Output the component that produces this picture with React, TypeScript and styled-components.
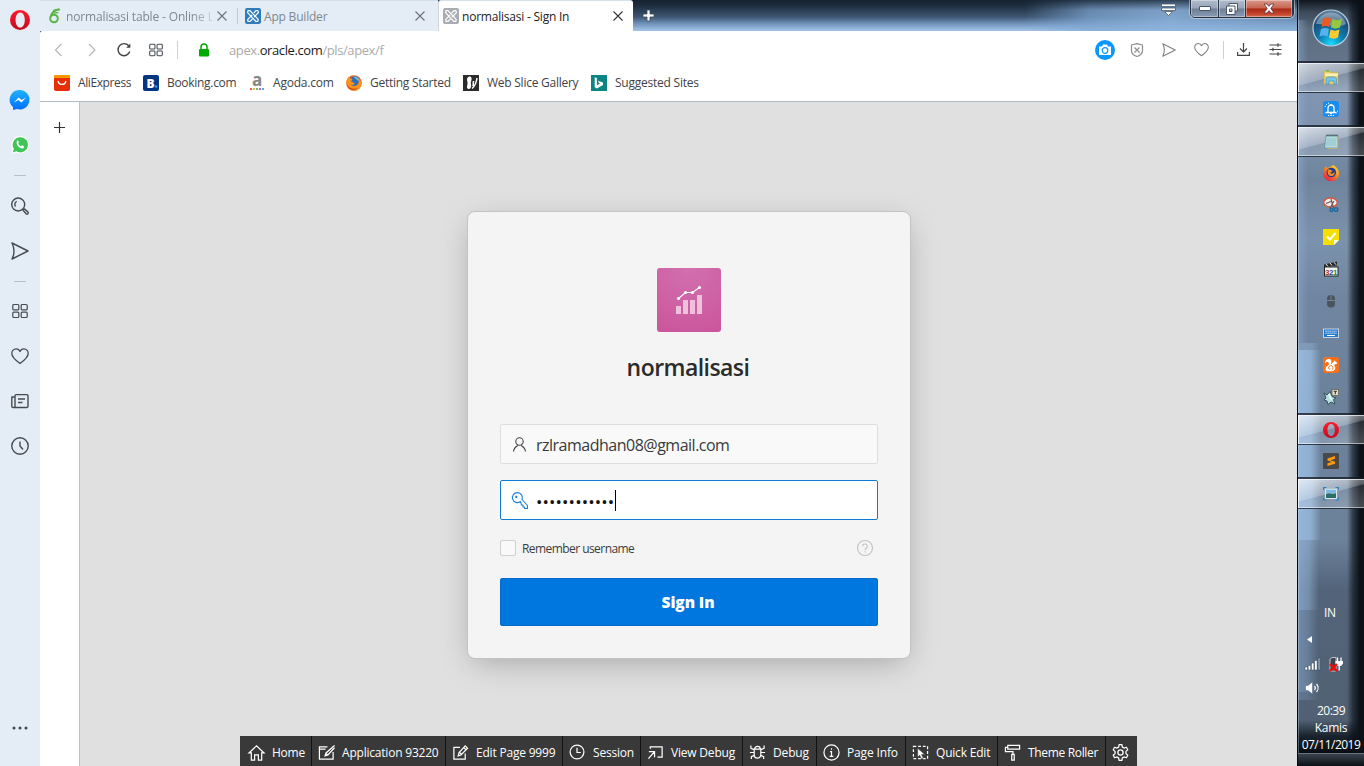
import React from "react";
import styled, { createGlobalStyle, css } from "styled-components";

const Global = createGlobalStyle`
  * { box-sizing: border-box; }
  body { margin: 0; overflow: hidden; font-family: "Open Sans", "Noto Sans", sans-serif; font-size: 12px; color: #3c3c3c; }
  svg { display: block; flex: none; overflow: visible; }
`;

const Desktop = styled.div`
  display: flex;
  width: 1364px;
  height: 766px;
  overflow: hidden;
  background: #101820;
`;

const Browser = styled.div`
  display: flex;
  width: 1297px;
  flex: none;
`;

const Label = styled.span<{ $ls?: number }>`
  white-space: nowrap;
  letter-spacing: ${(p) => p.$ls ?? 0}px;
`;

/* ---------- sidebar ---------- */

const Sidebar = styled.aside`
  width: 40px;
  flex: none;
  display: flex;
  flex-direction: column;
  align-items: center;
  background: #e4edf5;
`;

const SideItem = styled.div<{ $h: number }>`
  height: ${(p) => p.$h}px;
  width: 40px;
  flex: none;
  display: flex;
  align-items: center;
  justify-content: center;
`;

const SideRule = styled.div`
  width: 12px;
  height: 1px;
  background: #b4c2ce;
`;

const Spacer = styled.div<{ $h?: number; $w?: number }>`
  ${(p) =>
    p.$h !== undefined
      ? css`height: ${p.$h}px; flex: none;`
      : p.$w !== undefined
        ? css`width: ${p.$w}px; flex: none;`
        : css`flex: 1;`}
`;

/* ---------- window chrome ---------- */

const Main = styled.div`
  flex: 1;
  min-width: 0;
  display: flex;
  flex-direction: column;
`;

const TitleBar = styled.div`
  height: 31px;
  flex: none;
  display: flex;
  background:
    linear-gradient(180deg, rgba(20, 32, 46, 0.75) 0, rgba(20, 32, 46, 0) 10px),
    linear-gradient(90deg, rgba(128, 168, 212, 0) 0, rgba(128, 168, 212, 0) 985px, rgba(128, 168, 212, 0.7) 1050px, rgba(140, 178, 220, 0.85) 1130px, rgba(130, 168, 208, 0.6) 1257px),
    linear-gradient(180deg, #1b2a3a 0, #2a3d52 10px, #3e5673 17px, #6c8db3 23px, #95b8df 29px, #a3c4e8 31px);
`;

const Tab = styled.div<{ $w: number; $active?: boolean }>`
  width: ${(p) => p.$w}px;
  height: 31px;
  flex: none;
  display: flex;
  align-items: center;
  border-top: 1px solid #d3dfea;
  background: ${(p) => (p.$active ? "#fff" : "#e4edf5")};
  color: ${(p) => (p.$active ? "#222" : "#7d8790")};
  ${(p) => p.$active && css`border-radius: 3px 3px 0 0; border-left: 1px solid #cfd6de; padding-left: 4px;`}
`;

const TabText = styled.div<{ $w: number; $fade?: boolean }>`
  width: ${(p) => p.$w}px;
  margin-left: 3px;
  white-space: nowrap;
  ${(p) => p.$fade && css`mask-image: linear-gradient(90deg, #000 125px, rgba(0, 0, 0, 0.25) 146px);`}
`;

const TabSeparator = styled.div`
  width: 1px;
  height: 16px;
  margin: 0 6px 0 10px;
  background: #c3c8cd;
`;

const NewTab = styled.div`
  width: 31px;
  display: flex;
  align-items: center;
  justify-content: center;
`;

const WindowControls = styled.div`
  display: flex;
  height: 19px;
  width: 104px;
  margin: -1px 3px 0 14px;
  border: 1px solid #26303e;
  border-radius: 0 0 5px 5px;
  overflow: hidden;
  box-shadow: 0 0 0 1px rgba(255, 255, 255, 0.4);
`;

const WindowButton = styled.div<{ $w: number; $danger?: boolean }>`
  width: ${(p) => p.$w}px;
  display: flex;
  align-items: center;
  justify-content: center;
  border-right: 1px solid #2b3646;
  box-shadow: inset 0 0 0 1px rgba(255, 255, 255, 0.35);
  background: ${(p) =>
    p.$danger
      ? "linear-gradient(180deg,#d99a8c 0,#c76451 8px,#a82a15 9px,#c5452c 14px,#e08b66 19px)"
      : "linear-gradient(180deg,#b0bccb 0,#98a6b9 8px,#6f7f95 9px,#8fa2ba 19px)"};
`;

const AddressBar = styled.div`
  height: 37px;
  flex: none;
  display: flex;
  align-items: center;
  background: #fff;
  border-radius: 2px 0 0 0;
`;

const Slot = styled.div<{ $w: number }>`
  width: ${(p) => p.$w}px;
  flex: none;
  display: flex;
  align-items: center;
  justify-content: center;
`;

const BarRule = styled.div`
  width: 1px;
  height: 18px;
  background: #cfcfcf;
`;

const Url = styled.div`
  flex: 1;
  margin-left: 9px;
  font-size: 13px;
  color: #ababab;
  letter-spacing: -0.4px;
  b { font-weight: 400; color: #1b1b1b; }
`;

const BookmarkBar = styled.div`
  height: 34px;
  flex: none;
  display: flex;
  align-items: center;
  padding: 0 0 4px 14px;
  background: #fff;
  border-bottom: 1px solid #b0bac4;
`;

const Bookmark = styled.div<{ $w: number }>`
  width: ${(p) => p.$w}px;
  flex: none;
  display: flex;
  align-items: center;
  gap: 8px;
  color: #3f4347;
`;

/* ---------- page ---------- */

const Content = styled.div`
  flex: 1;
  display: flex;
  min-height: 0;
`;

const SidePanel = styled.div`
  width: 40px;
  flex: none;
  background: #fff;
  border-right: 1px solid #bfc3c6;
  display: flex;
  justify-content: center;
  padding-top: 20px;
`;

const Page = styled.main`
  flex: 1;
  background: #e0e0e0;
  display: flex;
  flex-direction: column;
  align-items: center;
  padding: 109px 0 0 1px;
`;

const Card = styled.section`
  width: 444px;
  height: 448px;
  flex: none;
  display: flex;
  flex-direction: column;
  align-items: center;
  padding: 56px 32px 0;
  background: #f4f4f4;
  border: 1px solid #c3c3c3;
  border-radius: 8px;
  box-shadow: 0 8px 32px -6px rgba(0, 0, 0, 0.28);
`;

const AppLogo = styled.div`
  width: 64px;
  height: 64px;
  border-radius: 3px;
  background: radial-gradient(circle at 50% 0, #d270ae 0, #ca559b 100%);
`;

const Title = styled.h1`
  margin: 17px 2px 0 0;
  height: 36px;
  line-height: 36px;
  font-size: 23px;
  font-weight: 600;
  color: #2b2b2b;
  letter-spacing: -0.55px;
`;

const Field = styled.div<{ $focus?: boolean }>`
  width: 378px;
  height: 40px;
  margin-top: ${(p) => (p.$focus ? 16 : 39)}px;
  flex: none;
  display: flex;
  align-items: center;
  padding-left: 10px;
  border: 1px solid ${(p) => (p.$focus ? "#0f7bd8" : "#dedede")};
  border-radius: 2px;
  background: ${(p) => (p.$focus ? "#fff" : "#f9f9f9")};
  font-size: 16px;
  color: #393939;
`;

const FieldText = styled.div`
  margin-left: 8px;
  padding-top: 2px;
  letter-spacing: -0.5px;
`;

const Bullets = styled.div`
  margin-left: 8px;
  padding-top: 3px;
  width: 79px;
  height: 24px;
  line-height: 22px;
  white-space: nowrap;
  font-size: 17px;
  letter-spacing: 0.13px;
  color: #111;
`;

const Caret = styled.div`
  width: 1px;
  height: 21px;
  background: #000;
`;

const OptionRow = styled.div`
  width: 378px;
  height: 16px;
  margin-top: 20px;
  display: flex;
  align-items: center;
`;

const Checkbox = styled.div`
  width: 16px;
  height: 16px;
  margin-right: 6px;
  border: 1px solid #d0d0d0;
  border-radius: 2px;
  background: #f9f9f9;
`;

const SignIn = styled.button`
  width: 378px;
  height: 48px;
  margin-top: 22px;
  border: 1px solid #026bc9;
  border-radius: 2px;
  background: #0076df;
  color: #fff;
  font: 800 15.5px "Open Sans", sans-serif;
  letter-spacing: -0.1px;
  padding: 0 2px 0 0;
`;

const DevBar = styled.nav`
  height: 30px;
  margin: auto 1px 0 0;
  flex: none;
  display: flex;
  background: #393939;
  color: #fff;
`;

const DevItem = styled.div<{ $w: number }>`
  width: ${(p) => p.$w}px;
  display: flex;
  align-items: center;
  gap: 7px;
  padding: 2px 0 0 6px;
  &:first-child { padding-left: 8px; }
  & + & { box-shadow: -1px 0 0 #121212; }
`;

/* ---------- desktop taskbar ---------- */

const Taskbar = styled.div`
  width: 67px;
  flex: none;
  display: flex;
  flex-direction: column;
  align-items: center;
  border-left: 1px solid #05080c;
  box-shadow: inset 1px 0 0 rgba(200, 220, 240, 0.35);
  background:
    linear-gradient(90deg, transparent 49px, rgba(8, 14, 22, 0.6) 55px, #0b1117 62px),
    radial-gradient(ellipse 24px 8px at 0 346px, transparent 50%, transparent),
    linear-gradient(90deg, rgba(165, 205, 245, 0.7) 0, rgba(165, 205, 245, 0.6) 13px, transparent 23px) 0 350px / 30px 190px no-repeat,
    linear-gradient(90deg, rgba(165, 205, 245, 0.35) 0, rgba(165, 205, 245, 0.3) 13px, transparent 21px) 0 343px / 30px 7px no-repeat,
    linear-gradient(90deg, rgba(155, 192, 232, 0.62) 0, rgba(155, 192, 232, 0.45) 11px, transparent 21px) 0 540px / 30px 70px no-repeat,
    linear-gradient(90deg, rgba(140, 175, 215, 0.52) 0, rgba(140, 175, 215, 0.35) 10px, transparent 20px) 0 610px / 30px 82px no-repeat,
    linear-gradient(90deg, rgba(140, 175, 215, 0.28) 0, rgba(140, 175, 215, 0.2) 10px, transparent 20px) 0 692px / 30px 8px no-repeat,
    linear-gradient(90deg, rgba(150, 185, 220, 0.4), transparent 10px) 0 20px / 30px 323px no-repeat,
    linear-gradient(180deg, #10161e 0, #3c4a5a 12px, #5d6d81 30px, #63748a 60px, #7f95b1 95px, #7c91ac 130px, #6f849c 180px, #7b92ad 240px, #70859f 300px, #6c819a 400px, #6c819a 540px, #53647a 590px, #516173 720px, #1a232d 736px, #080c11 754px);
`;

const StartOrb = styled.div`
  height: 61px;
  padding-top: 9px;
`;

const Task = styled.div<{ $open?: boolean }>`
  width: 66px;
  height: 32px;
  flex: none;
  display: flex;
  align-items: center;
  justify-content: center;
  ${(p) =>
    p.$open &&
    css`
      border-top: 2px solid rgba(16, 26, 36, 0.75);
      border-bottom: 1px solid rgba(16, 26, 36, 0.75);
      background:
        linear-gradient(165deg, rgba(255, 255, 255, 0.7) 0, rgba(255, 255, 255, 0.32) 48%, rgba(255, 255, 255, 0.12) 50%, rgba(255, 255, 255, 0.25) 100%) padding-box;
      box-shadow: inset 1px 1px 0 rgba(255, 255, 255, 0.65), inset 0 -1px 0 rgba(255, 255, 255, 0.5);
    `}
`;

const Tray = styled.div`
  flex: 1;
  width: 100%;
  display: flex;
  flex-direction: column;
  align-items: center;
  color: #fff;
`;

const TrayRow = styled.div<{ $h: number; $pl?: number }>`
  height: ${(p) => p.$h}px;
  flex: none;
  width: 100%;
  display: flex;
  align-items: center;
  gap: 8px;
  ${(p) => (p.$pl === undefined ? "justify-content: center;" : `padding-left: ${p.$pl}px;`)}
`;

const ShowDesktop = styled.div`
  width: 100%;
  height: 13px;
  border-top: 1px solid #6a737c;
  background: linear-gradient(180deg, #3a444e, #0a0f15);
`;

/* ---------- icons ---------- */

type IconProps = { s?: number; c?: string; w?: number; children?: React.ReactNode; box?: number };
const Icon = ({ s = 18, c = "#454b51", w = 1.2, box, children }: IconProps) => (
  <svg width={s} height={s} viewBox={`0 0 ${box ?? s} ${box ?? s}`} fill="none" stroke={c} strokeWidth={w} strokeLinejoin="round">
    {children}
  </svg>
);

const OperaLogo = ({ s }: { s: number }) => (
  <svg width={s} height={s} viewBox="0 0 20 20">
    <defs>
      <linearGradient id="op" x2="0" y2="1"><stop stopColor="#ff1b2d" /><stop offset="1" stopColor="#c20a1c" /></linearGradient>
    </defs>
    <path fillRule="evenodd" fill="url(#op)" d="M10 0a10 10 0 1 0 0 20a10 10 0 1 0 0-20M10.2 2.4c2.9 0 4.6 3.4 4.6 7.600s-1.700 7.600-4.600 7.600S5.600 14.200 5.600 10s1.700-7.600 4.600-7.600" />
  </svg>
);

const Close = ({ c }: { c: string }) => <Icon s={10} c={c} w={1.1}><path d="M.5.5l9 9M9.500.5l-9 9" /></Icon>;

const ApexIcon = ({ c }: { c: string }) => (
  <svg width="16" height="16" viewBox="0 0 16 16">
    <rect width="16" height="16" rx="2" fill={c} />
    <g fill="none" stroke="#fff" strokeWidth="1.2" strokeLinejoin="round">
      <path d="M3 2.600h2l8.200 8.800-.4 2h-2L2.600 4.600z" />
      <path d="M13 2.600h-2L8.800 5M7.200 6.800L2.600 11.600l.4 1.800h2L7.400 11M9 9.200L13.400 4.600 13 2.600" />
    </g>
  </svg>
);

const Heart = ({ s, c }: { s: number; c: string }) => (
  <Icon s={s} box={18} c={c} w={1.3}><path d="M9 16.500C4 13 .8 10 .8 6.300A4.400 4.400 0 0 1 5.200 1.800C7 1.800 8.300 2.800 9 4.500C9.700 2.800 11 1.800 12.800 1.800A4.400 4.400 0 0 1 17.200 6.300C17.200 10 14 13 9 16.500z" /></Icon>
);
const Send = ({ s, c }: { s: number; c: string }) => (
  <Icon s={s} box={18} c={c} w={1.4}><path d="M1 1l16 8L1 17c2.500-5 2.500-11 0-16z" /></Icon>
);
const Grid = ({ s }: { s: number }) => (
  <Icon s={s} box={16}><rect x=".8" y="1.500" width="6" height="5.400" rx="1" /><rect x="9.200" y="1.500" width="6" height="5.400" rx="1" /><rect x=".8" y="9.100" width="6" height="5.400" rx="1" /><rect x="9.200" y="9.100" width="6" height="5.400" rx="1" /></Icon>
);

const Firefox = () => (
  <svg width="16" height="16" viewBox="0 0 16 16">
    <circle cx="8" cy="8" r="7.800" fill="#e8611a" />
    <circle cx="8.500" cy="6.500" r="5.300" fill="#2f6fb8" />
    <path d="M7 1.500c3.500-.5 6 1.500 6.900 4.500l-3-1z" fill="#6ab8e6" />
    <path d="M.6 5.500C1.500 3 3 1.500 3.200 1.500c0 1.500 1.300 2.300 3.300 2.500L5 6.500c2 .2 2 1.500 3.800 1.700-1 2.600-3.600 1.600-3.600 1.600 2.500 2.800 6.800 1 7.400-2.200.5-1.600 0-3-.8-4.300 3 1.800 4 4.700 3.300 7-1 3.500-4 5.600-7.300 5.500C3 15.600-.6 11 .6 5.500z" fill="#f7931e" />
    <path d="M1 9c1.500 4.500 7 6 11 3.500-3 4-10.500 3-11-3.500z" fill="#d03a14" />
  </svg>
);

/* newer Firefox mark, as pinned on the taskbar */
const FirefoxQuantum = () => (
  <svg width="16" height="16" viewBox="0 0 16 16">
    <defs><linearGradient id="fq" x1=".9" y1="0" x2=".2" y2="1"><stop stopColor="#ffe030" /><stop offset=".45" stopColor="#ff8a1c" /><stop offset="1" stopColor="#e8154b" /></linearGradient></defs>
    <path d="M1 4l1.500-2.500L4.500 3 8 1.500 10 0c3.500 1.500 6 5 6 8.500A7.800 7.800 0 0 1 .3 8.500C.2 7 .5 5.500 1 4z" fill="url(#fq)" />
    <circle cx="8.300" cy="7.500" r="4.800" fill="#223f8f" />
    <path d="M5 4.500l2.500.3 2 1.400-2.300 1.600c.6 1.400 3 1.400 4.300-.8.5 3-1.500 4.500-3.800 4C5 10.500 4 7 5 4.500z" fill="#ff8a1c" />
  </svg>
);

const Tools = {
  home: <path d="M1 9.500L9 2l8 7.500h-2.500V17H11v-5.500H7V17H3.500V9.500z" />,
  app: <path d="M10 3H1.500v13H16V8.500M1.500 5.500H8M17.500 1.500L8.500 9.500 7.500 12.500 10.500 11.500 17.500 4M8.300 10l2 1.500" />,
  edit: <path d="M8.500 3.500H2V16h12V10M14 2l2.500 2.500-7 7L6.500 12.500 7.500 9zM12.500 4L15 6M8 9l2.500 2" />,
  clock: <><circle cx="8.500" cy="8.500" r="7.300" /><path d="M8.500 4v5h4" /></>,
  view: <path d="M3.500 5V3H16v11h-5M2 8h6v6M8 8L1.500 15.500" />,
  bug: <><path d="M5.500 5.500h7v6a3.500 3.500 0 0 1-7 0zM6 5.500a3 3 0 0 1 6 0M5.500 9H1M12.500 9H17M5.500 6L2 4.500V1.500M12.500 6L16 4.500V1.500M5.500 12L2.500 13.500V16M12.500 12l3 1.500V16" /></>,
  info: <><circle cx="9" cy="9" r="8" /><path d="M7.500 8H9v5M7 13h4M9 4.500v1.500" /></>,
  quick: <><path d="M1.500 2.500h15v13h-15z" strokeDasharray="3 2" /><path d="M6 4.500v9.500l2.200-2.200 1.800 4 2-.8-1.800-4H13.500z" fill="#fff" stroke="#393939" strokeWidth=".6" /></>,
  roller: <path d="M4 1.500h12.500v4H4zM4 3.500H1.500V8H9.500v3M8.200 11h2.600v6H8.200z" />,
};

const devItems: [keyof typeof Tools, string, number, number][] = [
  ["home", "Home", 72, -0.25],
  ["app", "Application 93220", 134, -0.21],
  ["edit", "Edit Page 9999", 117, -0.2],
  ["clock", "Session", 78, -0.2],
  ["view", "View Debug", 102, -0.2],
  ["bug", "Debug", 74, -0.15],
  ["info", "Page Info", 89, -0.15],
  ["quick", "Quick Edit", 92, -0.2],
  ["roller", "Theme Roller", 108, -0.33],
];

const Small = ({ children }: { children: React.ReactNode }) => <svg width="16" height="16" viewBox="0 0 16 16">{children}</svg>;

const tasks: [boolean, React.ReactNode][] = [
  [true, <Small><path d="M1 1h6l1 1.500h7V14H1z" fill="#e9ce70" stroke="#c6a445" strokeWidth=".5" /><path d="M2 3.500h13V6H2z" fill="#fbf0b4" /><path d="M3 14V8.500L5 7h6.500L13.500 8.500V14H11v-3H6v3z" fill="#78c5e6" stroke="#398dbc" strokeWidth=".6" /><path d="M3 1h3" stroke="#4dad38" /></Small>],
  [false, <Small><rect width="16" height="16" rx="3" fill="#168cf4" /><path d="M5 10.500V7a3 3 0 0 1 6 0v3.500l1.500 1h-9zM8 3v2M7 12.500h2" stroke="#fff" strokeWidth="1.300" fill="none" /><path d="M2 6c.5-2 2-3.500 4-4M14 10l1 .5M5 14.500h6" stroke="#fff" strokeDasharray="1.200 1.200" fill="none" /></Small>],
  [true, <Small><path d="M3 1.500h12V14H1.500z" fill="#b3dce0" stroke="#648b92" strokeWidth=".7" /><path d="M3.500 5h10M3.300 7h10M3 9h10M2.800 11h10" stroke="#7eafb6" strokeWidth=".6" /><path d="M15 2v12.500H4" stroke="#c8b070" strokeWidth=".8" fill="none" /><path d="M3.500 1.500h11" stroke="#344a50" strokeWidth="1.800" strokeDasharray="1 1" /></Small>],
  [false, <FirefoxQuantum />],
  [false, <Small><ellipse cx="7.500" cy="5.500" rx="6.800" ry="4.500" fill="#eee" stroke="#cf5b43" strokeWidth="1.500" /><path d="M8 2l2.500 9M11 4L7 11M3 6.500l5-2" stroke="#73564f" strokeWidth="1.200" /><g fill="none" stroke="#246a9d" strokeWidth="1.500"><circle cx="8.500" cy="13" r="1.500" /><circle cx="13" cy="12.500" r="1.800" /></g></Small>],
  [false, <Small><path d="M0 0h16v11l-5 5H0z" fill="#f5df00" /><path d="M11 16v-5h5z" fill="#fffbe0" /><path d="M4 7.500l3 3L12.500 4" fill="none" stroke="#fff" strokeWidth="2" /></Small>],
  [false, <Small><path d="M1 3.500L14 .5v4L1 6z" fill="#282828" /><path d="M3 3l2 2.500M7 2l2 2.500M11 1.200l2 2.500" stroke="#eee" /><rect x="1.500" y="6" width="13.500" height="9" fill="#f3f3ee" stroke="#252525" /><text x="2" y="13.500" fontSize="8" fontWeight="bold" fontFamily="Liberation Sans, sans-serif"><tspan fill="#bd3327">3</tspan><tspan fill="#1c4f9f" dx="-.4">2</tspan><tspan fill="#2d8a3a" dx="-.5">1</tspan></text></Small>],
  [false, <Small><rect x="4" y="2" width="8" height="12.500" rx="3.800" fill="#4b535c" /><path d="M4 7.500h8M8 2v5.500" stroke="#718397" /></Small>],
  [false, <Small><rect x=".5" y="4" width="15" height="8.500" fill="#237bd0" stroke="#c8d2dd" /><path d="M2.500 6.200h11M2.500 8.200h11" stroke="#fff" strokeDasharray="1.200 .8" /><path d="M4 10.500h8" stroke="#fff" /></Small>],
  [false, <Small><rect width="16" height="16" rx="2.500" fill="#f9701a" /><path d="M2.500 6.500C1.500 3.500 4 1.500 6.300 2 9 2.600 9 5.500 7.600 7.300 9 7 10 5.500 11 4.300l.8-1 .6 1.300c1.300.4 2 1.400 1.600 2.200l-2.700.6c-.2 1.300 1 2 1 3.600 0 2-1.500 3.200-3.800 3.200H4.500C2 13.800 2 10.500 4 9.300 5.700 8.300 6.500 6.500 5.400 5.400 4.400 4.700 3.200 5.200 2.500 6.500z" fill="#fff" /><path d="M8.800 13a2.300 2.300 0 1 0-3.300-1.700c.2.900 1.500 1 1.900.2" fill="none" stroke="#f9701a" strokeWidth=".9" /></Small>],
  [false, <Small><path d="M1 4l3 2 3-3.500 2 5 4 1.500-2.500 1.500 1.500 4.500-4-2-3 2.500-1-3.500L1 11l2-2z" fill="#b9e0e2" stroke="#2e484c" strokeWidth=".9" /><path d="M6 5l2.500 6" stroke="#e4ffff" strokeWidth="1.500" /><rect x="9" y="0.500" width="6.500" height="6" fill="#e0ddc8" stroke="#5c5b50" strokeWidth=".7" /><path d="M10.700 2.300h3.200M12.300 2.300v3" stroke="#302c25" /></Small>],
  [true, <OperaLogo s={16} />],
  [false, <Small><rect width="16" height="16" rx="1" fill="#484848" /><path d="M4.500 5.500L12 3v2.800L7.500 7.200 12 8.700v2L4.500 13v-2.700L9 9 4.500 7.500z" fill="#ff9b0b" /></Small>],
  [true, <Small><rect x="2" y="2.500" width="12" height="10.500" fill="#f6f9fb" stroke="#9caab5" strokeWidth=".5" /><path d="M3 3.500h10v4H3z" fill="#7dbbe6" /><path d="M3 8c3-2 7 1 10-1v5H3z" fill="#296f69" /><path d="M.6 4V1.500H3.500M12.500 1.500h2.900V4M.6 11.500V14H3.500M12.500 14h2.900v-2.500" fill="none" stroke="#2f82c3" strokeWidth="1.200" /></Small>],
];

export default function App() {
  return (
    <Desktop>
      <Global />
      <Browser>
        <Sidebar>
          <SideItem $h={40}><OperaLogo s={20} /></SideItem>
          <Spacer $h={37} />
          <SideItem $h={45}>
            <svg width="20" height="20" viewBox="0 0 20 20"><defs><linearGradient id="ms" x2="0" y2="1"><stop stopColor="#20b3ff" /><stop offset="1" stopColor="#006dff" /></linearGradient></defs><path d="M10 0a9.700 9.700 0 1 1-3 19L3 20v-3A9.700 9.700 0 0 1 10 0z" fill="url(#ms)" /><path d="M4 12.500l4.500-5 3 2.500 4.500-2.500-4.500 5-3-2.500z" fill="#fff" /></svg>
          </SideItem>
          <SideItem $h={45}>
            <svg width="18" height="18" viewBox="0 0 18 18"><path d="M9.200.2a8.600 8.600 0 1 1-4 16.200L.2 18l1.500-4.700A8.600 8.600 0 0 1 9.200.2z" fill="#fff" /><path d="M9.200 1.200a7.600 7.600 0 1 1-3.800 14.100L1.700 16.500l1.200-3.600A7.600 7.600 0 0 1 9.200 1.200z" fill="#3fc457" /><path d="M6 5c.6-.6 1.200-.5 1.500.2l.5 1.300-.8 1.200c.6 1.200 1.600 2 2.800 2.600l1-1 1.800.9c.5.400.2 1.500-.6 2C9.500 13.500 4 8.500 6 5z" fill="#fff" /></svg>
          </SideItem>
          <SideItem $h={16}><SideRule /></SideItem>
          <SideItem $h={45}><Icon w={1.4}><circle cx="7.200" cy="7.500" r="6.500" /><path d="M4.500 9.500a3.500 3.500 0 0 1 1.200-5.200M12 13.200l1.300-1.300 3.500 3a1.200 1.200 0 0 1-1.700 1.900z" /></Icon></SideItem>
          <SideItem $h={46}><Send s={18} c="#454b51" /></SideItem>
          <SideItem $h={15}><SideRule /></SideItem>
          <SideItem $h={44}><Grid s={16} /></SideItem>
          <SideItem $h={46}><Heart s={18} c="#454b51" /></SideItem>
          <SideItem $h={44}><Icon w={1.4}><path d="M4 15.500H2A1.200 1.200 0 0 1 .8 14.300V5h3M4 3.800A1.200 1.200 0 0 1 5.200 2.600h10.600A1.200 1.200 0 0 1 17 3.800v10.400a1.200 1.200 0 0 1-1.200 1.300H4zM7 7h7M7 10.500h4.500" /></Icon></SideItem>
          <SideItem $h={46}><Icon w={1.4}><circle cx="9" cy="9" r="8.200" /><path d="M9 4.500V9l3 3.500" /></Icon></SideItem>
          <Spacer />
          <SideItem $h={76}><svg width="16" height="4" viewBox="0 0 16 4" fill="#3e444a"><circle cx="2" cy="2" r="1.500" /><circle cx="8" cy="2" r="1.500" /><circle cx="14" cy="2" r="1.500" /></svg></SideItem>
        </Sidebar>
        <Main>
          <TitleBar>
            <Tab $w={398}>
              <Spacer $w={7} />
              <svg width="16" height="16" viewBox="0 0 16 16" fill="none" stroke="#5bb546"><circle cx="7" cy="10.500" r="3.800" strokeWidth="2" /><path d="M3.800 9C4 5 7 2.500 12.500 1" strokeWidth="2" /><path d="M6 2.500c2-.8 4.500-1 7-.6M6.500 5.500c1.500-1 3.500-1 5-.8" strokeWidth="1.300" /></svg>
              <TabText $w={146} $fade><Label $ls={-0.15}>normalisasi table - Online L</Label></TabText>
              <Spacer $w={5} />
              <Close c="#6b7177" />
              <TabSeparator />
              <Spacer $w={1} />
              <ApexIcon c="#2f7cbd" />
              <TabText $w={151}><Label $ls={-0.2}>App Builder</Label></TabText>
              <Close c="#6b7177" />
            </Tab>
            <Tab $w={195} $active>
              <ApexIcon c="#a9adb1" />
              <TabText $w={151}><Label $ls={-0.22}>normalisasi - Sign In</Label></TabText>
              <Close c="#333" />
            </Tab>
            <NewTab><svg width="13" height="13" viewBox="0 0 13 13"><path d="M5 1h3v4h4v3H8v4H5V8H1V5h4z" fill="#fff" stroke="#3e4c5d" strokeWidth=".8" /></svg></NewTab>
            <Spacer />
            <svg width="15" height="13" viewBox="0 0 15 13" style={{ marginTop: 3 }} fill="#fff" stroke="#44566e" strokeWidth=".8"><path d="M.5 1h14v2.600H.5zM.5 5h14v2.600H.5zM3.500 8.600h8L7.500 12.500z" /></svg>
            <WindowControls>
              <WindowButton $w={28}><svg width="12" height="5" viewBox="0 0 12 5"><rect x=".5" y=".5" width="11" height="4" rx=".5" fill="#fff" stroke="#47566b" /></svg></WindowButton>
              <WindowButton $w={27}><svg width="12" height="12" viewBox="0 0 12 12" fill="#fff" stroke="#47566b"><path d="M3 .5h8.500V8H3z" /><path fillRule="evenodd" d="M.5 3H9v8.500H.5zM3.500 6v2.500H6V6z" /></svg></WindowButton>
              <WindowButton $w={47} $danger><svg width="12" height="11" viewBox="0 0 12 11"><path d="M1 1h3l2 2.400L8 1h3L7.800 5.500 11 10H8L6 7.600 4 10H1l3.200-4.500z" fill="#fff" stroke="#5a3038" strokeWidth=".8" /></svg></WindowButton>
            </WindowControls>
          </TitleBar>
          <AddressBar>
            <Slot $w={38}><Icon s={14} c="#b8b8b8"><path d="M9.500 1L3.500 7l6 6" /></Icon></Slot>
            <Slot $w={26}><Icon s={14} c="#b8b8b8"><path d="M5 1l6 6-6 6" /></Icon></Slot>
            <Slot $w={39}><Icon s={14} c="#444" w={1.4}><path d="M12.800 8.500A6 6 0 1 1 12 3.200" /><path d="M13.300.5v4.200H9.200z" fill="#444" stroke="none" /></Icon></Slot>
            <Slot $w={25}><Grid s={14} /></Slot>
            <Slot $w={19}><BarRule /></Slot>
            <Slot $w={33}><svg width="12" height="14" viewBox="0 0 12 14"><rect x="1" y="6" width="10" height="7.500" rx="1" fill="#0a0" /><path d="M3 7V4a3 3 0 0 1 6 0v3" fill="none" stroke="#0a0" strokeWidth="1.500" /></svg></Slot>
            <Url>apex.<b>oracle.com</b>/pls/apex/f</Url>
            <Slot $w={32}><svg width="20" height="20" viewBox="0 0 20 20"><circle cx="10" cy="10" r="10" fill="#0a97ff" /><path d="M4 6.500h3l1-2h4l1 2h3V15H4z" fill="#fff" /><circle cx="10" cy="10.500" r="2.800" fill="#fff" stroke="#0a97ff" strokeWidth="1.200" /></svg></Slot>
            <Slot $w={32}><Icon s={14} c="#8c8c8c"><path d="M7 .7L12.500 2v5.500C12.500 10.500 10 12.500 7 13.500 4 12.500 1.500 10.500 1.500 7.500V2zM4.500 4.500l5 5M9.500 4.500l-5 5" /></Icon></Slot>
            <Slot $w={32}><Send s={14} c="#808080" /></Slot>
            <Slot $w={32}><Heart s={15} c="#808080" /></Slot>
            <Slot $w={12}><BarRule /></Slot>
            <Slot $w={28}><Icon s={13} c="#444"><path d="M6.500 0v9M3 5.500L6.500 9 10 5.500M.6 9v3.400h11.800V9" /></Icon></Slot>
            <Slot $w={37}><Icon s={13} c="#444"><path d="M.5 2h12M.5 6.500h12M.5 11h12M9 .3v3.400M4 4.800v3.400M9 9.300v3.400" /></Icon></Slot>
            <Slot $w={3} />
          </AddressBar>
          <BookmarkBar>
            <Bookmark $w={89}><Small><rect width="16" height="16" rx="2" fill="#e62e04" /><path d="M0 3V2a2 2 0 0 1 2-2h12a2 2 0 0 1 2 2v1z" fill="#ff9900" /><path d="M4 6c1 4.500 7 4.500 8 0" fill="none" stroke="#fff" strokeWidth="1.300" /></Small><Label $ls={-0.4}>AliExpress</Label></Bookmark>
            <Bookmark $w={106}><Small><rect width="16" height="16" rx="2" fill="#003580" /><text x="3.500" y="12.500" fontSize="12" fontWeight="800" fill="#fff">B</text><circle cx="13" cy="11.500" r="1.200" fill="#14a7ff" /></Small><Label $ls={-0.3}>Booking.com</Label></Bookmark>
            <Bookmark $w={97}><Small><text x="3" y="10.500" fontSize="17" fontWeight="700" fill="#858585">a</text><circle cx="2" cy="14" r="1.100" fill="#e5352d" /><circle cx="5" cy="14" r="1.100" fill="#f1a51d" /><circle cx="8" cy="14" r="1.100" fill="#45a950" /><circle cx="11" cy="14" r="1.100" fill="#8d4aac" /><circle cx="14" cy="14" r="1.100" fill="#3791d8" /></Small><Label $ls={-0.2}>Agoda.com</Label></Bookmark>
            <Bookmark $w={117}><Firefox /><Label $ls={-0.27}>Getting Started</Label></Bookmark>
            <Bookmark $w={128}><Small><rect width="16" height="16" fill="#2b2b2b" /><path d="M6 1.500c2-.5 3 1.500 2.500 3.500C8 7 7.500 7.500 8 9.500c.6 2-.3 4.500-2.200 4.500-1.500 0-2.300-1.500-1.600-3.500.5-1.800.6-2.600 0-4.500C3.500 4 4.500 2 6 1.500z" fill="#fff" /><path d="M10.500 6L10 11M14 3c-.5 4-2 8-5 10.500" fill="none" stroke="#fff" strokeWidth="1.500" /></Small><Label $ls={-0.25}>Web Slice Gallery</Label></Bookmark>
            <Bookmark $w={120}><Small><rect width="16" height="16" fill="#0c8484" /><path d="M3.700 2.300l2.200.8v7.200L9 8.500 7.700 7.800 6.800 5.700l5.200 1.900v2.300L5.900 13.500l-2.200-1.300z" fill="#fff" /></Small><Label $ls={-0.23}>Suggested Sites</Label></Bookmark>
          </BookmarkBar>
          <Content>
            <SidePanel><Icon s={11} c="#333"><path d="M5.500 0v11M0 5.500h11" /></Icon></SidePanel>
            <Page>
              <Card>
                <AppLogo>
                  <svg width="64" height="64" viewBox="0 0 64 64"><path d="M19 38h5v8h-5zM26 32h5v14h-5zM33 32h5v14h-5zM40 27h5v19h-5z" fill="#efc1dd" /><path d="M21.500 30.500l7-6H35.500l7-5" fill="none" stroke="#fff" strokeWidth="1.100" /><g fill="#fff"><circle cx="21.500" cy="30.500" r="1.600" /><circle cx="28.500" cy="24.500" r="1.600" /><circle cx="35.500" cy="24.500" r="1.600" /><circle cx="42.500" cy="19.500" r="1.600" /></g></svg>
                </AppLogo>
                <Title>normalisasi</Title>
                <Field>
                  <Icon s={17} c="#444" w={1.1}><circle cx="8.500" cy="5.500" r="3.700" /><path d="M2.500 15.500c.3-3 1.800-4.500 4.300-6M14.500 15.500c-.3-3-1.800-4.500-4.300-6" /></Icon>
                  <FieldText>rzlramadhan08@gmail.com</FieldText>
                </Field>
                <Field $focus>
                  <Icon s={17} c="#1c82da" w={1.1}><path d="M9.500 9.500a5 5 0 1 1 1.500-2l5.500 6v3h-3v-1.500H12V13h-1.500z" /><circle cx="5.300" cy="5" r=".6" fill="#1c82da" /></Icon>
                  <Bullets>••••••••••••</Bullets>
                  <Caret />
                </Field>
                <OptionRow>
                  <Checkbox />
                  <Label $ls={-0.56}>Remember username</Label>
                  <Spacer />
                  <svg width="16" height="16" viewBox="0 0 16 16" style={{ marginRight: 5 }} fill="none" stroke="#c2c2c2" strokeWidth="1.100"><circle cx="8" cy="8" r="7.500" /><path d="M5.700 6.300a2.300 2.300 0 1 1 3.600 1.900C8.300 8.800 8 9 8 10M8 11.300v1.300" /></svg>
                </OptionRow>
                <SignIn>Sign In</SignIn>
              </Card>
              <DevBar>
                {devItems.map(([icon, text, w, ls]) => (
                  <DevItem key={text} $w={w}>
                    <svg width="17" height="17" viewBox="0 0 18 18" fill="none" stroke="#fff" strokeWidth="1.300">{Tools[icon]}</svg>
                    <Label $ls={ls}>{text}</Label>
                  </DevItem>
                ))}
                <DevItem $w={31}>
                  <svg width="17" height="17" viewBox="0 0 24 24" fill="none" stroke="#fff" strokeWidth="1.800" strokeLinejoin="round"><path d="M10 1h4l.7 3.400 2.300 1.300 3.300-1.100 2 3.500L19.700 10.400v3.200l2.600 2.300-2 3.500-3.300-1.100-2.300 1.300L14 23h-4l-.7-3.400L7 18.300l-3.300 1.100-2-3.500 2.600-2.300v-3.200L1.700 8.100l2-3.500L7 5.700l2.300-1.300z" /><circle cx="12" cy="12" r="3.700" /></svg>
                </DevItem>
              </DevBar>
            </Page>
          </Content>
        </Main>
      </Browser>
      <Taskbar>
        <StartOrb>
          <svg width="38" height="38" viewBox="0 0 38 38">
            <defs><radialGradient id="orb" cx=".5" cy=".95" r=".9"><stop stopColor="#18dcff" /><stop offset=".4" stopColor="#0d7db4" /><stop offset=".8" stopColor="#1c4a70" /><stop offset="1" stopColor="#587c9a" /></radialGradient></defs>
            <circle cx="19" cy="19" r="18" fill="url(#orb)" stroke="#b5cddd" strokeWidth="1.200" />
            <path d="M4 15A15.500 15.500 0 0 1 34 15C25 20 13 14 4 15z" fill="#fff" opacity=".35" />
            <path d="M11 9.500c3-1.500 5-1.500 8 0L17.500 18c-3-1.500-5-1.500-8 0z" fill="#ea5b22" />
            <path d="M20.500 10c3 1.500 6 1.500 9.500 0L28 18.500c-3.500 1.500-6 1.500-9 0z" fill="#95c83e" />
            <path d="M9 20c3-1.500 5-1.500 8 0l-1.500 7.500c-3-1.500-5-1.500-8 0z" fill="#56b3ee" />
            <path d="M18.500 20.500c3 1.500 6 1.500 9 0L26 28.500c-3 1.500-6 1.500-9 0z" fill="#fdcb2e" />
          </svg>
        </StartOrb>
        {tasks.map(([open, icon], i) => <Task key={i} $open={open}>{icon}</Task>)}
        <Tray>
          <Spacer />
          <TrayRow $h={24} $pl={26}><Label $ls={-0.3}>IN</Label></TrayRow>
          <TrayRow $h={30} $pl={9}><svg width="5" height="7" viewBox="0 0 5 7"><path d="M5 0v7L0 3.500z" fill="#fff" /></svg></TrayRow>
          <TrayRow $h={20} $pl={7}>
            <svg width="16" height="12" viewBox="0 0 16 12" fill="#fff" stroke="#34475c" strokeWidth=".5"><path d="M0 9h2.500v3H0zM3.200 7.500h2.500V12H3.200zM6.400 5h2.500v7H6.400zM9.600 2.500h2.500V12H9.600z" /><path d="M12.800 0h2.500v12h-2.500z" fill="#8b9aab" /></svg>
            <svg width="15" height="16" viewBox="0 0 15 16"><path d="M1 3l2-1.500h4V15H1z" fill="#3c4450" stroke="#ddd" strokeWidth=".8" /><path d="M6.500 5h7.500v2.500L12 10H8.500L6.500 7.500z" fill="#fff" /><path d="M8.500 1.500V5M12 1.500V5M10.200 10v4.500" stroke="#fff" strokeWidth="1.300" /><path d="M1 8l7 7M8 8l-7 7" stroke="#f00b0b" strokeWidth="2.400" /></svg>
          </TrayRow>
          <TrayRow $h={28} $pl={7}><svg width="15" height="14" viewBox="0 0 15 14"><path d="M.5 4.500H3L7.500 1v12L3 9.500H.5z" fill="#fff" stroke="#53657a" strokeWidth=".5" /><path d="M9.500 5a3 3 0 0 1 0 4M11.500 3a6 6 0 0 1 0 8" fill="none" stroke="#fff" strokeWidth="1.200" /></svg></TrayRow>
          <TrayRow $h={16}><Label $ls={-0.5}>20:39</Label></TrayRow>
          <TrayRow $h={18}><Label $ls={-0.25}>Kamis</Label></TrayRow>
          <TrayRow $h={17}><Label $ls={-0.5}>07/11/2019</Label></TrayRow>
          <ShowDesktop />
        </Tray>
      </Taskbar>
    </Desktop>
  );
}
